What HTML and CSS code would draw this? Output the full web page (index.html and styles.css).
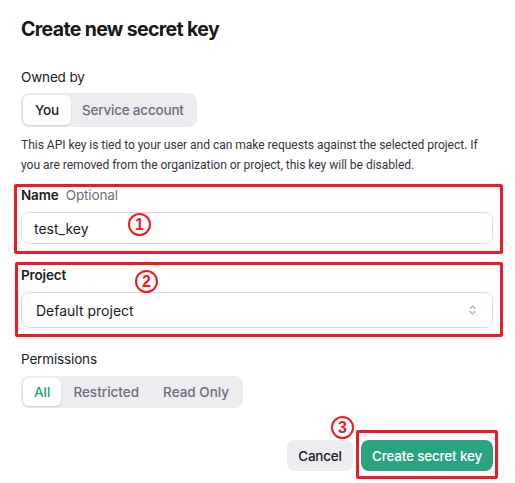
FILE: index.html
```html
<!DOCTYPE html>
<html>
<head>
<meta charset="utf-8">
<link rel="stylesheet" href="styles.css">
</head>
<body>
<div class="dialog">
  <h1 class="title">Create new secret key</h1>

  <div class="label owned">Owned by</div>
  <div class="seg seg-owner">
    <span class="seg-item active">You</span>
    <span class="seg-item">Service account</span>
  </div>

  <p class="desc">This API key is tied to your user and can make requests against the selected project. If you are removed from the organization or project, this key will be disabled.</p>

  <div class="field field-name">
    <div class="label strong">Name <span class="optional">Optional</span></div>
    <div class="input">test_key</div>
    <span class="mark mark1">1</span>
    <div class="annot annot1"></div>
  </div>

  <div class="field field-project">
    <div class="label strong">Project</div>
    <div class="input select">
      <span>Default project</span>
      <svg class="chev" width="7" height="10" viewBox="0 0 7 10"><path d="M1 3.5 L3.5 1 L6 3.5 M1 6.5 L3.5 9 L6 6.5" fill="none" stroke="#a9a9b8" stroke-width="1.1" stroke-linecap="round" stroke-linejoin="round"/></svg>
    </div>
    <span class="mark mark2">2</span>
    <div class="annot annot2"></div>
  </div>

  <div class="label perm">Permissions</div>
  <div class="seg seg-perm">
    <span class="seg-item active green">All</span>
    <span class="seg-item">Restricted</span>
    <span class="seg-item">Read Only</span>
  </div>

  <div class="actions">
    <button class="btn cancel">Cancel</button>
    <div class="create-wrap">
      <button class="btn create">Create secret key</button>
      <span class="mark mark3">3</span>
      <div class="annot annot3"></div>
    </div>
  </div>
</div>
</body>
</html>
```

FILE: styles.css
```css
* { box-sizing: border-box; }
html, body { margin: 0; padding: 0; background: #fff; }
body {
  font-family: Inter, "Noto Sans", "Liberation Sans", sans-serif;
  color: #202123;
  width: 515px;
  height: 483px;
  overflow: hidden;
}
.dialog {
  padding: 17px 22px 0 21px;
  display: flex;
  flex-direction: column;
}
.title {
  margin: 0;
  font-size: 19.5px;
  line-height: 24px;
  font-weight: 700;
  letter-spacing: -0.65px;
  color: #18181b;
}
.label {
  font-size: 13.5px;
  line-height: 18px;
  color: #202123;
  letter-spacing: -0.15px;
}
.owned { margin-top: 27px; }
.strong { font-weight: 600; }
.optional { font-weight: 400; color: #6e6e80; margin-left: 4px; }

.seg {
  display: flex;
  align-self: flex-start;
  background: #ececf1;
  border-radius: 8px;
  padding: 2px;
}
.seg-item {
  font-size: 13.5px;
  font-weight: 500;
  color: #6e6e80;
  letter-spacing: -0.2px;
  padding: 0 11px;
  display: flex;
  align-items: center;
  border-radius: 6px;
}
.seg-item.active {
  background: #fff;
  color: #202123;
  box-shadow: 0 1px 2px rgba(0,0,0,0.12);
}
.seg-item.green { color: #19a37e; }
.seg-owner { margin-top: 7px; height: 34px; }
.seg-owner .seg-item { height: 30px; }
.seg-owner .active { padding: 0 12px; }
.seg-perm { margin-top: 8px; height: 32px; }
.seg-perm .seg-item { height: 28px; padding: 0 12px; letter-spacing: 0; }
.seg-perm .seg-item.active { padding: 0 11px; }

.desc {
  margin: 9px 0 0;
  font-family: Roboto, "Liberation Sans", sans-serif;
  font-size: 12.1px;
  line-height: 19.5px;
  letter-spacing: -0.05px;
  color: #353740;
}
.field { position: relative; display: flex; flex-direction: column; }
.field-name { margin-top: 11px; }
.field-project { margin-top: 22px; }
.field .label { margin-bottom: 8px; }
.input {
  border: 1px solid #d9d9e3;
  border-radius: 8px;
  height: 32px;
  padding: 0 12px;
  display: flex;
  align-items: center;
  font-size: 14px;
  color: #202123;
}
.select {
  height: 36px;
  padding: 0 14px;
  justify-content: space-between;
}
.chev { margin-right: 2px; }

.perm { margin-top: 22px; }

.actions {
  margin-top: 32px;
  display: flex;
  justify-content: flex-end;
  gap: 8px;
}
.btn {
  font-family: inherit;
  font-size: 13.5px;
  font-weight: 500;
  letter-spacing: -0.2px;
  border: none;
  border-radius: 8px;
  height: 31px;
  padding: 0;
}
.cancel { background: #ececf1; color: #202123; width: 66px; }
.create { background: #2aa47f; color: #fff; width: 132px; }
.create-wrap { position: relative; }

.annot {
  position: absolute;
  border: 3px solid #ed1c24;
  border-radius: 2px;
  pointer-events: none;
}
.annot1 { left: -7px; right: -10px; top: -2px; bottom: -10px; }
.annot2 { left: -6px; right: -10px; top: -4px; bottom: -9px; }
.annot3 { left: -5px; right: -5px; top: -10px; bottom: -8px; }

.mark {
  position: absolute;
  width: 23px;
  height: 23px;
  border: 2px solid #ed1c24;
  border-radius: 50%;
  color: #ed1c24;
  font-family: "Liberation Sans", Arial, sans-serif;
  font-weight: 700;
  font-size: 16px;
  line-height: 19px;
  text-align: center;
}
.mark1 { left: 107px; top: 27px; }
.mark2 { left: 114px; top: 4px; }
.mark3 { left: -30px; top: -24px; }
```
